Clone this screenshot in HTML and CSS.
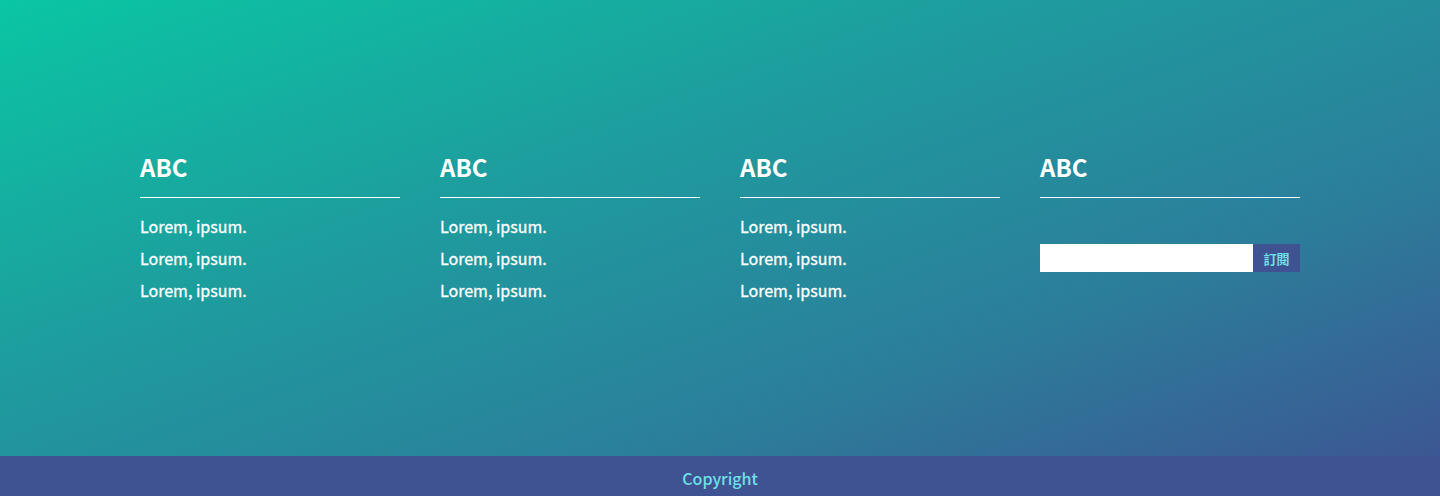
FILE: index.html
```html
<!DOCTYPE html>
<html lang="zh-Hant">
<head>
<meta charset="utf-8">
<title>Footer</title>
<link rel="stylesheet" href="styles.css">
</head>
<body>
<section class="main">
  <div class="cols">
    <div class="col">
      <h3 class="title">ABC</h3>
      <ul class="list">
        <li>Lorem, ipsum.</li>
        <li>Lorem, ipsum.</li>
        <li>Lorem, ipsum.</li>
      </ul>
    </div>
    <div class="col">
      <h3 class="title">ABC</h3>
      <ul class="list">
        <li>Lorem, ipsum.</li>
        <li>Lorem, ipsum.</li>
        <li>Lorem, ipsum.</li>
      </ul>
    </div>
    <div class="col">
      <h3 class="title">ABC</h3>
      <ul class="list">
        <li>Lorem, ipsum.</li>
        <li>Lorem, ipsum.</li>
        <li>Lorem, ipsum.</li>
      </ul>
    </div>
    <div class="col">
      <h3 class="title">ABC</h3>
      <form class="sub">
        <input class="sub-input" type="text">
        <button class="sub-btn" type="button">訂閱</button>
      </form>
    </div>
  </div>
</section>
<footer class="copy">Copyright</footer>
</body>
</html>
```
FILE: styles.css
```css
* { box-sizing: border-box; }
html, body { margin: 0; padding: 0; }
body {
  font-family: "Noto Sans CJK TC", "Noto Sans", sans-serif;
  color: #fff;
}
.main {
  height: 456px;
  background: linear-gradient(160deg, #0ac6a3 0%, #1f9a9e 40%, #2b7f9b 70%, #3c5793 100%);
  padding-top: 149px;
}
.cols {
  width: 1160px;
  margin: 0 auto;
  display: grid;
  grid-template-columns: repeat(4, 260px);
  column-gap: 40px;
}
.title {
  margin: 0;
  font-size: 24px;
  line-height: 36px;
  font-weight: 700;
  padding-bottom: 12px;
  border-bottom: 1px solid #fff;
}
.list {
  list-style: none;
  margin: 12px 0 0;
  padding: 0;
}
.list li {
  font-size: 16px;
  line-height: 32px;
  font-weight: 400;
  -webkit-text-stroke: 0.3px #fff;
}
.sub {
  display: flex;
  margin-top: 46px;
  height: 28px;
}
.sub-input {
  flex: 1;
  border: none;
  margin: 0;
  padding: 0 8px;
  background: #fff;
  outline: none;
}
.sub-btn {
  width: 47px;
  border: none;
  margin: 0;
  padding: 0;
  background: #3f5291;
  color: #6ee0e6;
  font-family: "Noto Sans CJK TC", sans-serif;
  font-size: 13px;
  font-weight: 700;
}
.copy {
  height: 40px;
  background: #3f5291;
  color: #6ee0e6;
  text-align: center;
  font-size: 16px;
  font-weight: 500;
  line-height: 44px;
}
```
